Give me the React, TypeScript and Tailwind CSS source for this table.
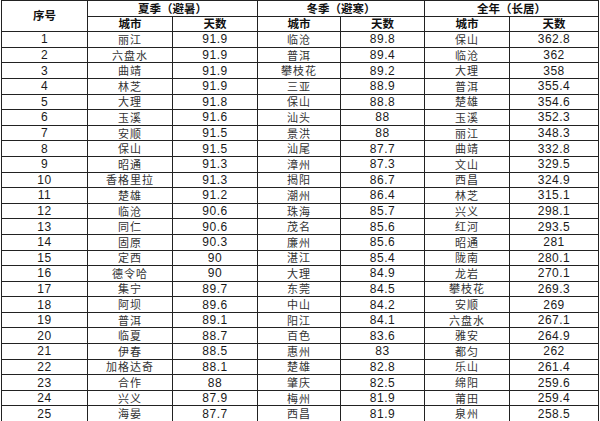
const rows: [string, string, string, string, string, string][] = [
  ["丽江", "91.9", "临沧", "89.8", "保山", "362.8"],
  ["六盘水", "91.9", "普洱", "89.4", "临沧", "362"],
  ["曲靖", "91.9", "攀枝花", "89.2", "大理", "358"],
  ["林芝", "91.9", "三亚", "88.9", "普洱", "355.4"],
  ["大理", "91.8", "保山", "88.8", "楚雄", "354.6"],
  ["玉溪", "91.6", "汕头", "88", "玉溪", "352.3"],
  ["安顺", "91.5", "景洪", "88", "丽江", "348.3"],
  ["保山", "91.5", "汕尾", "87.7", "曲靖", "332.8"],
  ["昭通", "91.3", "漳州", "87.3", "文山", "329.5"],
  ["香格里拉", "91.3", "揭阳", "86.7", "西昌", "324.9"],
  ["楚雄", "91.2", "潮州", "86.4", "林芝", "315.1"],
  ["临沧", "90.6", "珠海", "85.7", "兴义", "298.1"],
  ["同仁", "90.6", "茂名", "85.6", "红河", "293.5"],
  ["固原", "90.3", "廉州", "85.6", "昭通", "281"],
  ["定西", "90", "湛江", "85.4", "陇南", "280.1"],
  ["德令哈", "90", "大理", "84.9", "龙岩", "270.1"],
  ["集宁", "89.7", "东莞", "84.5", "攀枝花", "269.3"],
  ["阿坝", "89.6", "中山", "84.2", "安顺", "269"],
  ["普洱", "89.1", "阳江", "84.1", "六盘水", "267.1"],
  ["临夏", "88.7", "百色", "83.6", "雅安", "264.9"],
  ["伊春", "88.5", "惠州", "83", "都匀", "262"],
  ["加格达奇", "88.1", "楚雄", "82.8", "乐山", "261.4"],
  ["合作", "88", "肇庆", "82.5", "绵阳", "259.6"],
  ["兴义", "87.9", "梅州", "81.9", "莆田", "259.4"],
  ["海晏", "87.7", "西昌", "81.9", "泉州", "258.5"],
];

const cell = "border border-[#222] p-0 text-center align-middle leading-none";
const head = `${cell} font-bold text-[11.5px] text-[#111]`;
const city = `${cell} text-[11px] tracking-[1px] text-[#333]`;
const num = `${cell} text-[12px] tracking-[0.5px] text-[#1a1a1a] [font-family:'Liberation_Sans',sans-serif]`;

export default function App() {
  return (
    <div className="w-[600px] h-[421px] overflow-hidden bg-white pl-px">
      <table
        className="table-fixed border-collapse w-[597px] [font-family:'Noto_Sans_CJK_SC',sans-serif]"
      >
        <colgroup>
          <col className="w-[86px]" />
          <col className="w-[85px]" />
          <col className="w-[85px]" />
          <col className="w-[83px]" />
          <col className="w-[84px]" />
          <col className="w-[85px]" />
          <col className="w-[89px]" />
        </colgroup>
        <thead>
          <tr className="h-[15.6px]">
            <th rowSpan={2} className={head}>序号</th>
            <th colSpan={2} className={head}>夏季（避暑）</th>
            <th colSpan={2} className={head}>冬季（避寒）</th>
            <th colSpan={2} className={head}>全年（长居）</th>
          </tr>
          <tr className="h-[15.6px]">
            <th className={head}>城市</th>
            <th className={head}>天数</th>
            <th className={head}>城市</th>
            <th className={head}>天数</th>
            <th className={head}>城市</th>
            <th className={head}>天数</th>
          </tr>
        </thead>
        <tbody>
          {rows.map((r, i) => (
            <tr key={i} className="h-[15.6px]">
              <td className={num}>{i + 1}</td>
              <td className={city}>{r[0]}</td>
              <td className={num}>{r[1]}</td>
              <td className={city}>{r[2]}</td>
              <td className={num}>{r[3]}</td>
              <td className={city}>{r[4]}</td>
              <td className={num}>{r[5]}</td>
            </tr>
          ))}
        </tbody>
      </table>
    </div>
  );
}
